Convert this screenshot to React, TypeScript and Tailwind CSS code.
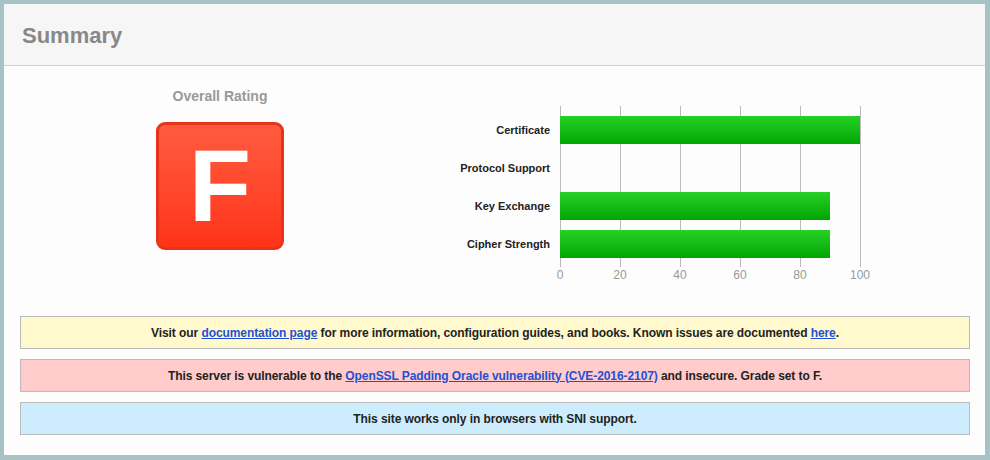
import React from "react";

const rows = [
  { label: "Certificate", value: 100 },
  { label: "Protocol Support", value: 0 },
  { label: "Key Exchange", value: 90 },
  { label: "Cipher Strength", value: 90 },
];

const ticks = [0, 20, 40, 60, 80, 100];

export default function App() {
  return (
    <div
      className="w-[990px] h-[460px] bg-[#fdfdfd] border-t-4 border-l-4 border-r-[5px] border-b-[5px] border-[#a6c2c4] flex flex-col"
      style={{ fontFamily: '"Liberation Sans", Arial, sans-serif' }}
    >
      <div className="h-[62px] shrink-0 bg-[#f6f6f6] border-b border-[#c8d4d4] flex items-center pl-[18px] pt-[2px]">
        <h1 className="text-[22px] font-bold text-[#888] leading-none">Summary</h1>
      </div>

      <div className="flex h-[250px] shrink-0">
        <div className="w-[432px] flex flex-col items-center pt-[22px]">
          <div className="text-[14px] leading-[16px] font-bold text-[#999]">Overall Rating</div>
          <div className="mt-[18px] w-[128px] h-[128px] rounded-[9px] border-[3px] border-[#e6341c] bg-linear-to-b from-[#ff5a3e] to-[#ff3318] flex items-center justify-center">
            <span className="text-white font-bold text-[102px] leading-none">F</span>
          </div>
        </div>

        <div className="flex pt-[40px]">
          <div className="w-[114px] flex flex-col gap-[10px] pt-[10px]">
            {rows.map((r) => (
              <div key={r.label} className="h-[28px] flex items-center justify-end text-[11px] font-bold text-[#222]">
                {r.label}
              </div>
            ))}
          </div>
          <div className="ml-[10px] flex flex-col">
            <div className="relative w-[301px] h-[161px] pt-[10px] flex flex-col gap-[10px]">
              {ticks.map((t, i) => (
                <div
                  key={t}
                  className="absolute top-0 bottom-0 w-px bg-[#bbb]"
                  style={{ left: i * 60 }}
                />
              ))}
              {rows.map((r) => (
                <div key={r.label} className="relative h-[28px]">
                  {r.value > 0 && (
                    <div
                      className="h-[28px] bg-linear-to-b from-[#25d125] to-[#00a500]"
                      style={{ width: r.value * 3 }}
                    />
                  )}
                </div>
              ))}
            </div>
            <div className="relative h-[16px] w-[301px]">
              {ticks.map((t, i) => (
                <span
                  key={t}
                  className="absolute top-0 text-[12px] leading-[16px] text-[#999] -translate-x-1/2"
                  style={{ left: i * 60 }}
                >
                  {t}
                </span>
              ))}
            </div>
          </div>
        </div>
      </div>

      <div className="flex flex-col gap-[10px] ml-4 mr-[15px] tracking-[-0.08px]">
        <div className="h-[33px] bg-[#fff9cd] border border-[#bbb] flex items-center justify-center text-[12px] font-bold text-[#222]">
          <span>
            Visit our{" "}
            <a className="text-[#1f50d4] underline" href="#">documentation page</a>{" "}
            for more information, configuration guides, and books. Known issues are documented{" "}
            <a className="text-[#1f50d4] underline" href="#">here</a>.
          </span>
        </div>
        <div className="h-[33px] bg-[#ffcbcb] border border-[#bbb] flex items-center justify-center text-[12px] font-bold text-[#222]">
          <span>
            This server is vulnerable to the{" "}
            <a className="text-[#1f50d4] underline" href="#">OpenSSL Padding Oracle vulnerability (CVE-2016-2107)</a>{" "}
            and insecure. Grade set to F.
          </span>
        </div>
        <div className="h-[33px] bg-[#cdedfe] border border-[#bbb] flex items-center justify-center text-[12px] font-bold text-[#222]">
          <span>This site works only in browsers with SNI support.</span>
        </div>
      </div>
    </div>
  );
}
